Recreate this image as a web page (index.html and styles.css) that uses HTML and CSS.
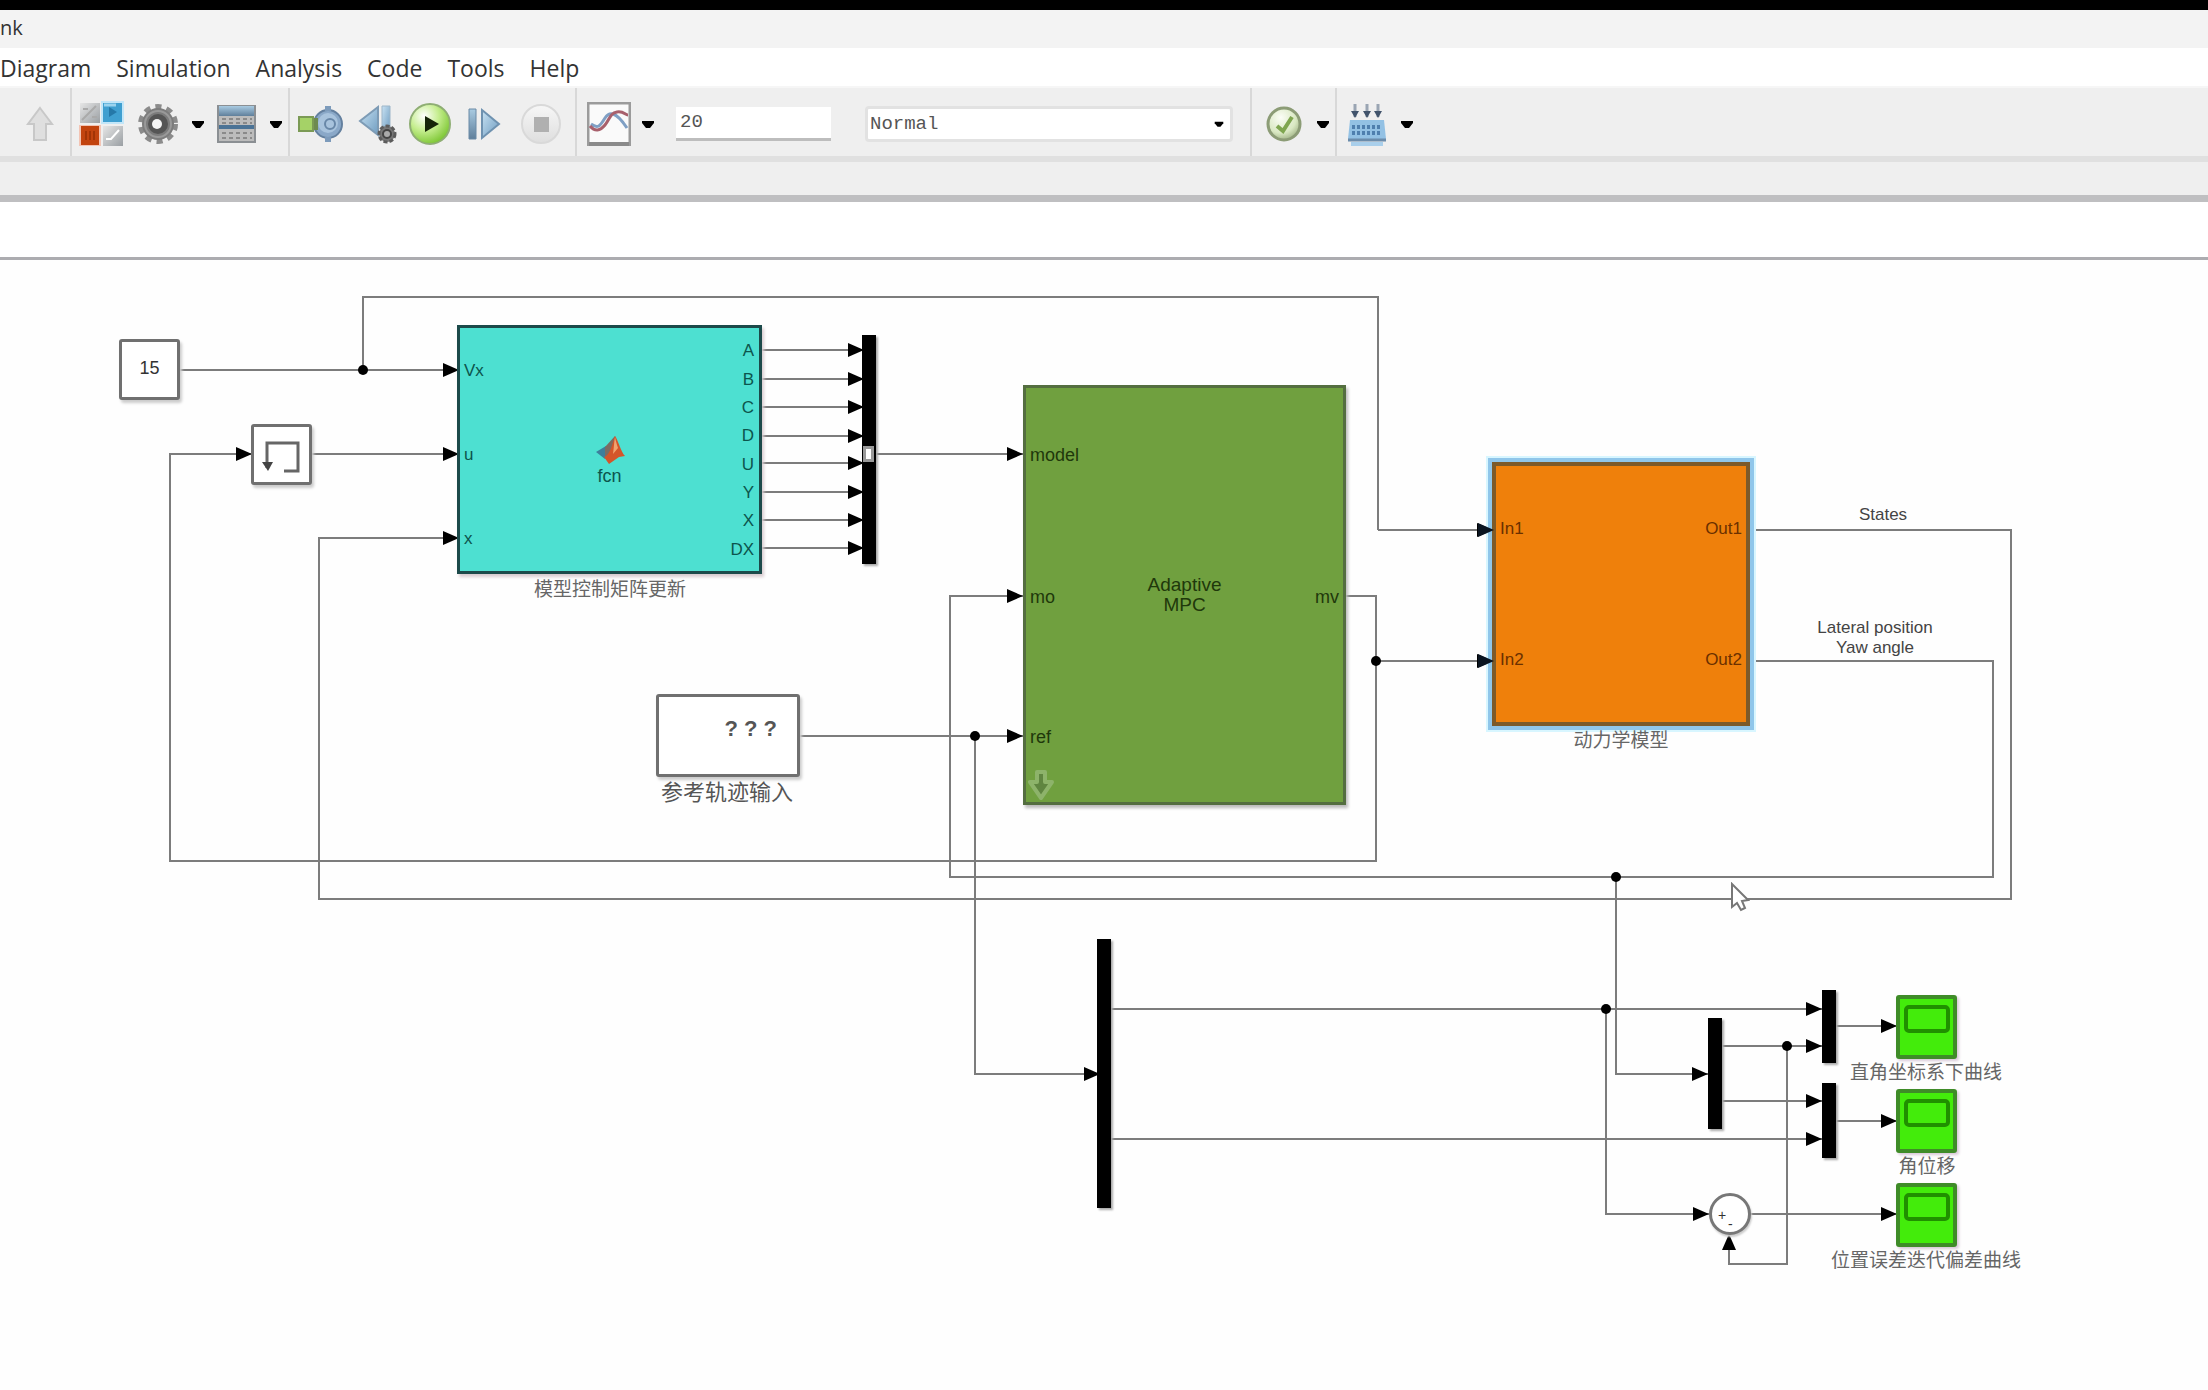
FILE: index.html
```html
<!DOCTYPE html>
<html lang="zh-CN">
<head>
<meta charset="utf-8">
<title>Simulink</title>
<link rel="stylesheet" href="styles.css">
</head>
<body>
<header class="titlebar">nk</header>
<nav class="menubar">
  <button class="menu">Diagram</button>
  <button class="menu">Simulation</button>
  <button class="menu">Analysis</button>
  <button class="menu">Code</button>
  <button class="menu">Tools</button>
  <button class="menu">Help</button>
</nav>

<svg class="defs" aria-hidden="true">
  <defs>
    <linearGradient id="steel" x1="0" y1="0" x2="0" y2="1"><stop offset="0" stop-color="#a9cbe2"/><stop offset="1" stop-color="#5f7f9b"/></linearGradient>
    <linearGradient id="sky" x1="0" y1="0" x2="1" y2="1"><stop offset="0" stop-color="#c8e2f3"/><stop offset="1" stop-color="#6f9cc0"/></linearGradient>
    <linearGradient id="silver" x1="0" y1="0" x2="1" y2="1"><stop offset="0" stop-color="#e6e6e6"/><stop offset="1" stop-color="#9a9fa3"/></linearGradient>
    <radialGradient id="lime" cx="0.35" cy="0.3" r="0.8"><stop offset="0" stop-color="#ffffff"/><stop offset="0.45" stop-color="#c6ee90"/><stop offset="1" stop-color="#6fbf22"/></radialGradient>
    <radialGradient id="moss" cx="0.4" cy="0.3" r="0.8"><stop offset="0" stop-color="#fbfdf6"/><stop offset="0.6" stop-color="#d9e8c2"/><stop offset="1" stop-color="#8fa374"/></radialGradient>
    <linearGradient id="disc" x1="0" y1="0" x2="0" y2="1"><stop offset="0" stop-color="#f7f7f7"/><stop offset="1" stop-color="#dedede"/></linearGradient>
    <symbol id="caret" viewBox="0 0 14 10"><path d="M1 2h12v2L9 9H5L1 4z" fill="#000"/></symbol>
  </defs>
</svg>

<div class="toolbar">
  <div class="group group-nav">
    <button class="tool" aria-label="Up to parent">
      <svg width="28" height="36" viewBox="0 0 28 36"><path d="M14 2L26 18H20V34H8V18H2z" fill="#dfdfdf" stroke="#c8c8c8" stroke-width="2"/></svg>
    </button>
  </div>
  <div class="group group-model">
    <button class="tool" aria-label="Library browser">
      <svg width="46" height="46" viewBox="0 0 46 46">
        <rect x="1" y="2" width="20" height="20" fill="url(#silver)"/><path d="M3 19L17 5M4 8h5M13 16h5" stroke="#aaa" stroke-width="2"/>
        <rect x="22" y="0" width="23" height="23" fill="#c3e6f8"/><rect x="24" y="2" width="19" height="19" fill="#3f9fd0"/><path d="M30 6v10l8-5z" fill="#2578a8"/><path d="M25 4h12" stroke="#9bd3ee" stroke-width="3"/>
        <rect x="0" y="24" width="22" height="21" fill="#f3c4b4"/><rect x="2" y="25" width="18" height="19" fill="#c2440f"/><path d="M7 30v9M11 30v9M15 30v9" stroke="#a23406" stroke-width="2"/>
        <rect x="24" y="25" width="20" height="20" fill="url(#silver)"/><path d="M27 38h5l8-9" stroke="#fff" stroke-width="2" fill="none"/>
      </svg>
    </button>
    <button class="tool" aria-label="Model configuration">
      <svg width="42" height="42" viewBox="0 0 42 42"><circle cx="21" cy="21" r="17" fill="none" stroke="#8b8b8b" stroke-width="6" stroke-dasharray="6 5"/><circle cx="21" cy="21" r="16" fill="#7c7c7c"/><circle cx="21" cy="21" r="10" fill="#555"/><circle cx="21" cy="21" r="13" fill="none" stroke="#999" stroke-width="2"/><circle cx="20" cy="21" r="5" fill="#f4f4f4"/></svg>
    </button>
    <button class="tool" aria-label="Model configuration menu"><svg width="14" height="10"><use href="#caret"/></svg></button>
    <button class="tool" aria-label="Model explorer">
      <svg width="40" height="38" viewBox="0 0 40 38"><rect x="1" y="1" width="37" height="36" fill="#bcbcbc" stroke="#8b8f93" stroke-width="2"/><rect x="2" y="1" width="35" height="10" fill="url(#steel)"/><path d="M2 22h35" stroke="#4b7396" stroke-width="4"/><path d="M5 14h30M5 18h30M5 28h30M5 33h30" stroke="#8a8a8a" stroke-width="2" stroke-dasharray="4 3"/></svg>
    </button>
    <button class="tool" aria-label="Model explorer menu"><svg width="14" height="10"><use href="#caret"/></svg></button>
  </div>
  <div class="group group-run">
    <button class="tool" aria-label="Fast restart">
      <svg width="52" height="38" viewBox="0 0 52 38"><circle cx="31" cy="19" r="14" fill="#8aa8c8" stroke="#64809f" stroke-width="2"/><path d="M28 1h6v5h-6zM28 32h6v5h-6z" fill="#7d9bbb"/><circle cx="31" cy="18" r="10" fill="#a8c3dd"/><circle cx="33" cy="19" r="5" fill="none" stroke="#6887a8" stroke-width="2"/><rect x="2" y="12" width="14" height="14" fill="#a5d267" stroke="#7b9a55" stroke-width="2"/><path d="M17 13h4v12h-4" fill="#6e8a50"/></svg>
    </button>
    <button class="tool" aria-label="Step back">
      <svg width="41" height="42" viewBox="0 0 41 42"><path d="M20 4V32L2 18z" fill="url(#sky)" stroke="#7d9bb5" stroke-width="2"/><path d="M24 3h8v26h-8z" fill="url(#sky)" stroke="#9db6c9"/><circle cx="29" cy="31" r="8" fill="#777" stroke="#5c5c5c" stroke-width="3" stroke-dasharray="4 2"/><circle cx="29" cy="31" r="4" fill="#aaa" stroke="#444" stroke-width="2"/></svg>
    </button>
    <button class="tool" aria-label="Run">
      <svg width="44" height="46" viewBox="0 0 44 46"><circle cx="22" cy="23" r="20" fill="url(#lime)" stroke="#8fae74" stroke-width="2"/><path d="M17 15L31 23L17 31z" fill="#152408"/></svg>
    </button>
    <button class="tool tool-step" aria-label="Step forward">
      <svg width="34" height="34" viewBox="0 0 34 34"><path d="M2 2h7v30H2z" fill="url(#steel)" stroke="#6b8aa6"/><path d="M15 3L32 17L15 31z" fill="url(#sky)" stroke="#6f92b0" stroke-width="2"/></svg>
    </button>
    <button class="tool tool-stop" aria-label="Stop" disabled>
      <svg width="42" height="42" viewBox="0 0 42 42"><circle cx="21" cy="21" r="19" fill="url(#disc)" stroke="#d9d9d9" stroke-width="2"/><rect x="14" y="14" width="15" height="15" fill="#b0b0b0"/></svg>
    </button>
  </div>
  <div class="group group-sim">
    <button class="tool" aria-label="Data inspector">
      <svg width="44" height="44" viewBox="0 0 44 44"><rect x="1" y="1" width="42" height="42" fill="#fafafa" stroke="#9b9b9b" stroke-width="3"/><path d="M2 42h40" stroke="#8a8a8a" stroke-width="4"/><path d="M4 22c8 6 10 0 14-6s10-8 22 10" fill="none" stroke="#7f9fc4" stroke-width="3"/><path d="M3 24c5 6 10 5 15-1s5-12 12-13 8 3 11 3" fill="none" stroke="#a8606c" stroke-width="3"/></svg>
    </button>
    <button class="tool" aria-label="Data inspector menu"><svg width="14" height="10"><use href="#caret"/></svg></button>
    <input class="stop-time" type="text" value="20" aria-label="Simulation stop time">
    <span class="mode">
      <select class="mode-select" aria-label="Simulation mode"><option>Normal</option></select>
      <svg class="mode-caret" width="10" height="8" viewBox="0 0 14 10"><use href="#caret"/></svg>
    </span>
  </div>
  <div class="group group-check">
    <button class="tool" aria-label="Model advisor">
      <svg width="38" height="40" viewBox="0 0 38 40"><circle cx="19" cy="20" r="16" fill="url(#moss)" stroke="#8c9c76" stroke-width="3"/><path d="M12 22l6 5L27 13" fill="none" stroke="#7fa650" stroke-width="4"/></svg>
    </button>
    <button class="tool" aria-label="Model advisor menu"><svg width="14" height="10"><use href="#caret"/></svg></button>
  </div>
  <div class="group group-build">
    <button class="tool" aria-label="Build model">
      <svg width="40" height="44" viewBox="0 0 40 44"><path d="M8 2v13M20 2v13M31 2v13" stroke="#9aa5b3" stroke-width="3"/><path d="M4 9h8l-4 7zM16 9h8l-4 7zM27 9h8l-4 7z" fill="#41536b"/><path d="M3 18h34l2 19H1z" fill="#93c1e4"/><path d="M5 25h30M5 31h30" stroke="#4f7fae" stroke-width="4" stroke-dasharray="3 2"/><path d="M1 38h38" stroke="#6b8cab" stroke-width="3"/><path d="M4 42h32" stroke="#a9cfeb" stroke-width="4"/></svg>
    </button>
    <button class="tool" aria-label="Build menu"><svg width="14" height="10"><use href="#caret"/></svg></button>
  </div>
</div>
<div class="tabstrip"></div>
<div class="pathbar"></div>

<main class="canvas">
  <svg class="wires" width="2208" height="1130" viewBox="0 260 2208 1130" aria-hidden="true">
    <defs>
      <marker id="arrow" markerUnits="userSpaceOnUse" markerWidth="17" markerHeight="14" refX="16" refY="7" orient="auto"><path d="M0 0L16 7L0 14z" fill="#000"/></marker>
    </defs>
    <g class="wire">
      <path d="M180 370H459"/><path class="plain" d="M363 370V297H1378V530"/><path d="M1378 530H1493"/>
      <path d="M312 454H459"/>
      <path d="M762 350H864"/><path d="M762 379H864"/><path d="M762 407H864"/><path d="M762 436H864"/><path d="M762 463H864"/><path d="M762 492H864"/><path d="M762 520H864"/><path d="M762 548H864"/>
      <path d="M874 454H1023"/>
      <path d="M800 736H1023"/>
      <path d="M1346 596H1376V661H1493"/>
      <path d="M1376 661V861H170V454H252"/>
      <path d="M1752 661H1993V877H950V596H1023"/>
      <path d="M1752 530H2011V899H319V538H459"/>
      <path d="M975 736V1074H1100"/>
      <path d="M1110 1009H1822"/><path d="M1110 1139H1822"/>
      <path d="M1616 877V1074H1708"/>
      <path d="M1722 1046H1822"/><path d="M1722 1101H1822"/>
      <path d="M1606 1009V1214H1709"/>
      <path d="M1836 1026H1897"/><path d="M1836 1121H1897"/><path d="M1751 1214H1897"/>
      <path d="M1787 1046V1264H1729V1234"/>
    </g>
    <g class="junction">
      <circle cx="363" cy="370" r="5"/><circle cx="975" cy="736" r="5"/><circle cx="1376" cy="661" r="5"/><circle cx="1616" cy="877" r="5"/><circle cx="1606" cy="1009" r="5"/><circle cx="1787" cy="1046" r="5"/>
    </g>
  </svg>

  <div class="node plainblock constant"><span>15</span></div>
  <div class="node plainblock memory">
    <svg width="54" height="54" viewBox="0 0 54 54"><path d="M29 43H43V15H12V40" fill="none" stroke="#666" stroke-width="3"/><path d="M7 34h11l-5 9z" fill="#444"/></svg>
  </div>

  <div class="node fcn">
    <span class="port in vx">Vx</span><span class="port in u">u</span><span class="port in x">x</span>
    <div class="fcn-name">
      <svg width="30" height="30" viewBox="0 0 30 30"><path d="M1 17l10-6 5 5-6 8z" fill="#3d7f9c"/><path d="M10 12L20 1l3 8-8 14-5-2z" fill="#7d6b62"/><path d="M20 1c3 4 6 16 10 20l-6 1-10 7-5-7c6-2 8-12 11-21z" fill="#d4552a"/><path d="M20 2c1 5 2 8 3 11l-5 6c1-7 1-12 2-17z" fill="#f0a470"/></svg>
      <span>fcn</span>
    </div>
    <ul class="outs"><li>A</li><li>B</li><li>C</li><li>D</li><li>U</li><li>Y</li><li>X</li><li>DX</li></ul>
  </div>
  <div class="caption cap-fcn">模型控制矩阵更新</div>
  <div class="node bar mux-model"><i class="bar-port"></i></div>

  <div class="node mpc">
    <span class="port in model">model</span><span class="port in mo">mo</span><span class="port in ref">ref</span><span class="port out mv">mv</span>
    <div class="mpc-name">Adaptive<br>MPC</div>
    <svg class="mask-arrow" width="26" height="32" viewBox="0 0 26 32"><path d="M9 3h8v10h7L13 29L2 13h7z" fill="#5f8540" stroke="#8db36a" stroke-width="4" stroke-linejoin="round"/></svg>
  </div>

  <div class="node plainblock source"><span>? ? ?</span></div>
  <div class="caption caption-large cap-source">参考轨迹输入</div>

  <div class="node plant">
    <span class="port in in1">In1</span><span class="port in in2">In2</span><span class="port out in1">Out1</span><span class="port out in2">Out2</span>
  </div>
  <svg class="plant-arrows" width="18" height="150" viewBox="0 0 18 150" aria-hidden="true"><path d="M0 2L16 9L0 16zM0 133L16 140L0 147z" fill="#0a1420"/></svg>
  <div class="caption cap-plant">动力学模型</div>
  <div class="signal sig-states">States</div>
  <div class="signal sig-lateral">Lateral position<br>Yaw angle</div>

  <div class="node bar demux-ref"></div>
  <div class="node bar demux-out"></div>
  <div class="node bar mux-xy"></div>
  <div class="node bar mux-yaw"></div>
  <div class="node sum"><span class="sign plus">+</span><span class="sign minus">-</span></div>

  <div class="node scope scope-xy"><i class="screen"></i></div>
  <div class="caption cap-xy">直角坐标系下曲线</div>
  <div class="node scope scope-yaw"><i class="screen"></i></div>
  <div class="caption cap-yaw">角位移</div>
  <div class="node scope scope-err"><i class="screen"></i></div>
  <div class="caption cap-err">位置误差迭代偏差曲线</div>

  <svg class="pointer" width="20" height="30" viewBox="0 0 20 30" aria-hidden="true"><path d="M2 2V25L7 21L11 28L15 26L12 19L18 18z" fill="#fff" stroke="#777" stroke-width="2"/></svg>
</main>
</body>
</html>
```

FILE: styles.css
```css
* { box-sizing: border-box; }

body {
  margin: 0;
  min-height: 100vh;
  display: flex;
  flex-direction: column;
  border-top: 10px solid #000;
  background: #fefefe;
  color: #333;
  font-family: "Liberation Sans", "Noto Sans CJK SC", sans-serif;
  overflow: hidden;
}

button { border: 0; margin: 0; padding: 0; background: none; font: inherit; color: inherit; }
svg { display: block; }
.defs { position: absolute; width: 0; height: 0; }

/* window chrome */
.titlebar {
  height: 38px;
  background: #f3f3f3;
  font: 20px/36px "Open Sans", sans-serif;
}
.menubar {
  display: flex;
  gap: 25px;
  height: 38px;
  background: #fff;
  font: 23px/40px "Open Sans", sans-serif;
}
.toolbar {
  display: flex;
  height: 76px;
  background: #efefef;
  border-top: 2px solid #f6f6f6;
  border-bottom: 6px solid #e0e0e0;
}
.group { display: flex; align-items: center; border-right: 2px solid #d8d8d8; padding-top: 3px; }
.tool { display: flex; align-items: center; justify-content: center; }
.group-nav { padding-left: 26px; padding-right: 16px; }
.group-model { gap: 12px; padding-left: 7px; padding-right: 5px; }
.group-run { gap: 9px; padding-left: 7px; padding-right: 9px; }
.group-sim { gap: 10px; padding-left: 10px; padding-right: 17px; }
.group-check { gap: 13px; padding-left: 13px; padding-right: 5px; }
.group-build { gap: 13px; padding-left: 10px; border-right: 0; }
.tool-step { width: 46px; }
.tool-stop { width: 50px; }

.stop-time, .mode-select {
  border: 0;
  border-radius: 0;
  background: #fff;
  color: #555;
  font: 19px "Liberation Mono", monospace;
}
.stop-time {
  width: 155px;
  height: 34px;
  margin: 0 24px 0 11px;
  padding: 0 4px;
  border-bottom: 3px solid #bdbdbd;
}
.mode { position: relative; }
.mode-select {
  display: block;
  appearance: none;
  width: 368px;
  height: 36px;
  padding: 0 2px;
  border: 3px solid #e2e2e2;
  border-radius: 4px;
}
.mode-caret { position: absolute; right: 9px; top: 14px; pointer-events: none; }

.tabstrip { height: 40px; background: #efefef; border-bottom: 7px solid #bfbfc1; }
.pathbar { height: 58px; background: #fff; border-bottom: 3px solid #acacb0; }

/* diagram */
.canvas { position: relative; flex: 1; overflow: hidden; font-size: 17px; line-height: 20px; }
.wires { position: absolute; left: 0; top: 0; }
.wire path { fill: none; stroke: #7c7c7c; stroke-width: 2; marker-end: url(#arrow); }
.wire .plain { marker-end: none; }
.junction { fill: #000; }

.node { position: absolute; }
.plainblock {
  display: flex;
  align-items: center;
  justify-content: center;
  background: #fff;
  border: 3px solid #707070;
  border-radius: 3px;
  box-shadow: 2px 3px 3px #ccc;
}
.constant { left: 119px; top: 79px; width: 61px; height: 61px; font-size: 18px; padding-bottom: 4px; }
.memory { left: 251px; top: 164px; width: 61px; height: 61px; }
.source { left: 656px; top: 434px; width: 144px; height: 83px; font-size: 22px; font-weight: bold; color: #555; padding: 0 20px 13px 0; justify-content: flex-end; }

.fcn {
  left: 457px; top: 65px; width: 305px; height: 249px;
  background: #4de0d1;
  border: 3px solid #1c4a4a;
  box-shadow: 2px 3px 3px #d8ccd0;
  color: #0c554d;
}
.port { position: absolute; }
.in { left: 4px; }
.out { right: 4px; }
.vx { top: 33px; }
.u { top: 117px; }
.x { top: 201px; }
.fcn-name { display: flex; flex-direction: column; align-items: center; gap: 1px; padding-top: 107px; font-size: 18px; }
.outs { position: absolute; right: 5px; top: 9px; margin: 0; padding: 0; list-style: none; text-align: right; display: grid; height: 227px; grid-template-rows: repeat(8, 1fr); align-items: center; }

.bar { width: 14px; background: #000; box-shadow: 2px 2px 2px #aaa; }
.mux-model { left: 862px; top: 75px; height: 229px; }
.bar-port { position: absolute; left: 1px; top: 111px; width: 11px; height: 16px; background: #fff; border: 3px solid #999; }
.demux-ref { left: 1097px; top: 679px; height: 269px; }
.demux-out { left: 1708px; top: 758px; height: 111px; }
.mux-xy { left: 1822px; top: 730px; height: 73px; }
.mux-yaw { left: 1822px; top: 823px; height: 75px; }

.mpc {
  left: 1023px; top: 125px; width: 323px; height: 420px;
  background: #70a03f;
  border: 3px solid #546e40;
  box-shadow: 2px 3px 3px #bbb;
  color: #1f380b;
  font-size: 18px;
}
.model { top: 57px; }
.mo, .mv { top: 199px; }
.ref { top: 339px; }
.mpc-name { padding-top: 187px; font-size: 19px; line-height: 20px; text-align: center; }
.mask-arrow { position: absolute; left: 2px; bottom: 1px; }

.plant {
  left: 1492px; top: 202px; width: 258px; height: 264px;
  background: #ef800b;
  border: 4px solid #7c5a2a;
  box-shadow: 0 0 0 4px #90c6ea, 0 0 0 6px #d8f6ff;
  color: #6b3000;
}
.plant-arrows { position: absolute; left: 1478px; top: 261px; }
.in1 { top: 53px; }
.in2 { top: 184px; }

.caption, .signal { position: absolute; transform: translateX(-50%); white-space: nowrap; text-align: center; color: #444; }
.caption { font-size: 19px; line-height: 24px; color: #666; }
.caption-large { font-size: 22px; line-height: 28px; color: #555; }
.cap-fcn { left: 610px; top: 318px; }
.cap-source { left: 727px; top: 519px; }
.cap-plant { left: 1621px; top: 469px; }
.cap-xy { left: 1926px; top: 801px; }
.cap-yaw { left: 1927px; top: 895px; }
.cap-err { left: 1926px; top: 989px; }
.sig-states { left: 1883px; top: 245px; }
.sig-lateral { left: 1875px; top: 358px; }

.sum { left: 1709px; top: 933px; width: 42px; height: 42px; border: 3px solid #777; border-radius: 50%; background: #fff; box-shadow: 1px 2px 2px #ccc; }
.sign { position: absolute; font-size: 14px; line-height: 14px; }
.plus { left: 6px; top: 12px; }
.minus { left: 16px; top: 21px; }

.scope {
  left: 1896px; width: 61px; height: 64px;
  background: #43ec0b;
  border: 4px solid #3f8c28;
  border-radius: 3px;
  box-shadow: 2px 2px 3px #d8c8d8;
}
.scope-xy { top: 735px; }
.scope-yaw { top: 829px; }
.scope-err { top: 923px; }
.screen { display: block; margin: 6px 3px 0 4px; height: 28px; border: 4px solid #209000; border-radius: 5px; }

.pointer { position: absolute; left: 1730px; top: 622px; }
```
